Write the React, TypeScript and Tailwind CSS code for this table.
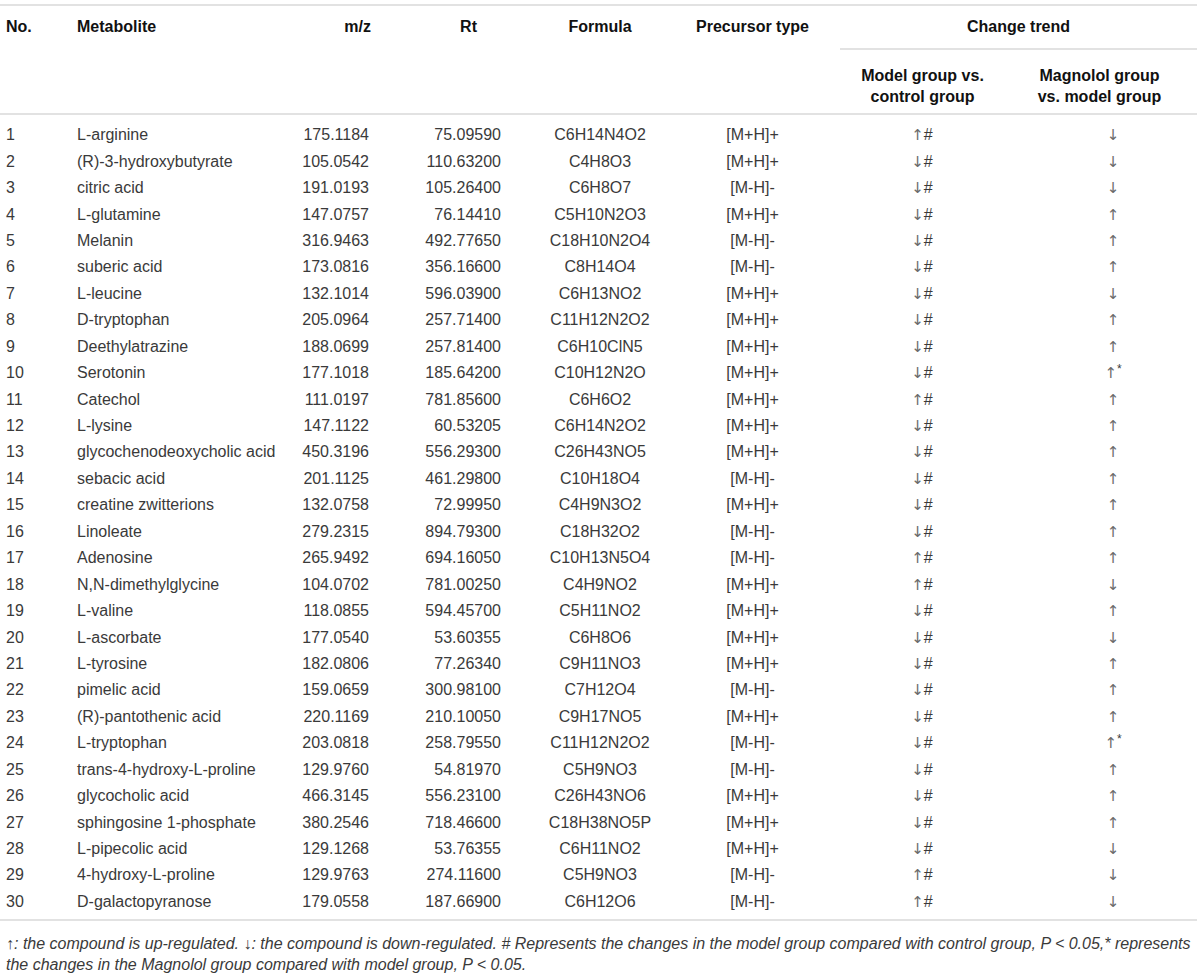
import React from "react";

type Row = [string, string, string, string, string, string, string];

const rows: Row[] = [
  ["L-arginine", "175.1184", "75.09590", "C6H14N4O2", "[M+H]+", "↑#", "↓"],
  ["(R)-3-hydroxybutyrate", "105.0542", "110.63200", "C4H8O3", "[M+H]+", "↓#", "↓"],
  ["citric acid", "191.0193", "105.26400", "C6H8O7", "[M-H]-", "↓#", "↓"],
  ["L-glutamine", "147.0757", "76.14410", "C5H10N2O3", "[M+H]+", "↓#", "↑"],
  ["Melanin", "316.9463", "492.77650", "C18H10N2O4", "[M-H]-", "↓#", "↑"],
  ["suberic acid", "173.0816", "356.16600", "C8H14O4", "[M-H]-", "↓#", "↑"],
  ["L-leucine", "132.1014", "596.03900", "C6H13NO2", "[M+H]+", "↓#", "↓"],
  ["D-tryptophan", "205.0964", "257.71400", "C11H12N2O2", "[M+H]+", "↓#", "↑"],
  ["Deethylatrazine", "188.0699", "257.81400", "C6H10ClN5", "[M+H]+", "↓#", "↑"],
  ["Serotonin", "177.1018", "185.64200", "C10H12N2O", "[M+H]+", "↓#", "↑*"],
  ["Catechol", "111.0197", "781.85600", "C6H6O2", "[M+H]+", "↑#", "↑"],
  ["L-lysine", "147.1122", "60.53205", "C6H14N2O2", "[M+H]+", "↓#", "↑"],
  ["glycochenodeoxycholic acid", "450.3196", "556.29300", "C26H43NO5", "[M+H]+", "↓#", "↑"],
  ["sebacic acid", "201.1125", "461.29800", "C10H18O4", "[M-H]-", "↓#", "↑"],
  ["creatine zwitterions", "132.0758", "72.99950", "C4H9N3O2", "[M+H]+", "↓#", "↑"],
  ["Linoleate", "279.2315", "894.79300", "C18H32O2", "[M-H]-", "↓#", "↑"],
  ["Adenosine", "265.9492", "694.16050", "C10H13N5O4", "[M-H]-", "↑#", "↑"],
  ["N,N-dimethylglycine", "104.0702", "781.00250", "C4H9NO2", "[M+H]+", "↑#", "↓"],
  ["L-valine", "118.0855", "594.45700", "C5H11NO2", "[M+H]+", "↓#", "↑"],
  ["L-ascorbate", "177.0540", "53.60355", "C6H8O6", "[M+H]+", "↓#", "↓"],
  ["L-tyrosine", "182.0806", "77.26340", "C9H11NO3", "[M+H]+", "↓#", "↑"],
  ["pimelic acid", "159.0659", "300.98100", "C7H12O4", "[M-H]-", "↓#", "↑"],
  ["(R)-pantothenic acid", "220.1169", "210.10050", "C9H17NO5", "[M+H]+", "↓#", "↑"],
  ["L-tryptophan", "203.0818", "258.79550", "C11H12N2O2", "[M-H]-", "↓#", "↑*"],
  ["trans-4-hydroxy-L-proline", "129.9760", "54.81970", "C5H9NO3", "[M-H]-", "↓#", "↑"],
  ["glycocholic acid", "466.3145", "556.23100", "C26H43NO6", "[M+H]+", "↓#", "↑"],
  ["sphingosine 1-phosphate", "380.2546", "718.46600", "C18H38NO5P", "[M+H]+", "↓#", "↑"],
  ["L-pipecolic acid", "129.1268", "53.76355", "C6H11NO2", "[M+H]+", "↓#", "↓"],
  ["4-hydroxy-L-proline", "129.9763", "274.11600", "C5H9NO3", "[M-H]-", "↑#", "↓"],
  ["D-galactopyranose", "179.0558", "187.66900", "C6H12O6", "[M-H]-", "↑#", "↓"],
];

function Arrow({ c }: { c: string }) {
  return (
    <span
      className="text-[15px] font-normal text-[#6a6a6a]"
      style={{ fontFamily: '"DejaVu Sans", "Liberation Sans", sans-serif' }}
    >
      {c + "\uFE0E"}
    </span>
  );
}

function Trend({ v }: { v: string }) {
  const arrow = v[0];
  const rest = v.slice(1);
  return (
    <span className="inline-flex items-baseline">
      <Arrow c={arrow} />
      {rest === "*" ? (
        <span className="relative -top-[5px] text-[12px]">*</span>
      ) : (
        <span>{rest}</span>
      )}
    </span>
  );
}

export default function App() {
  return (
    <div
      className="w-[1200px] h-[980px] bg-white overflow-hidden"
      style={{ fontFamily: '"Liberation Sans", Arial, sans-serif' }}
    >
      <div className="w-[1197px] pt-[4px]">
        {/* Header */}
        <div className="flex border-t-2 border-b-2 border-[#e2e2e2] text-[16px] font-bold text-[#111] leading-[20px]">
          <div className="w-[70px] pl-[6px] pt-[11px]">No.</div>
          <div className="w-[210px] pl-[7px] pt-[11px]">Metabolite</div>
          <div className="w-[110px] pr-[19px] pt-[11px] text-right">m/z</div>
          <div className="w-[130px] pr-[43px] pt-[11px] text-right">Rt</div>
          <div className="w-[160px] pt-[11px] text-center">Formula</div>
          <div className="w-[145px] pt-[11px] text-center">Precursor type</div>
          <div className="flex-1 flex flex-col">
            <div className="pt-[11px] pb-[11px] text-center ml-[15px] border-b-2 border-[#e2e2e2]">
              Change trend
            </div>
            <div className="flex pt-[15px] pb-[6px] leading-[21px]">
              <div className="w-[195px] text-center">
                Model group vs.
                <br />
                control group
              </div>
              <div className="flex-1 text-center pr-[18px]">
                Magnolol group
                <br />
                vs. model group
              </div>
            </div>
          </div>
        </div>

        {/* Body */}
        <div className="pt-[7px] pb-[4px] border-b-2 border-[#e2e2e2] text-[16px] text-[#3a3a3a]">
          {rows.map((r, i) => (
            <div key={i} className="flex items-center h-[26.45px]">
              <div className="w-[70px] pl-[6px]">{i + 1}</div>
              <div className="w-[210px] pl-[7px] whitespace-nowrap">{r[0]}</div>
              <div className="w-[110px] pr-[21px] text-right">{r[1]}</div>
              <div className="w-[130px] pr-[19px] text-right">{r[2]}</div>
              <div className="w-[160px] text-center">{r[3]}</div>
              <div className="w-[145px] text-center">{r[4]}</div>
              <div className="w-[200px] text-center pr-[6px]">
                <Trend v={r[5]} />
              </div>
              <div className="flex-1 text-center pl-[4px]">
                <Trend v={r[6]} />
              </div>
            </div>
          ))}
        </div>

        {/* Footnote */}
        <div className="pt-[12px] pl-[6px] pr-[2px] text-[16px] italic leading-[21px] text-[#3a3a3a]">
          ↑: the compound is up-regulated. ↓: the compound is down-regulated. # Represents the changes in the model group compared with control group, P &lt; 0.05,* represents the changes in the Magnolol group compared with model group, P &lt; 0.05.
        </div>
      </div>
    </div>
  );
}
